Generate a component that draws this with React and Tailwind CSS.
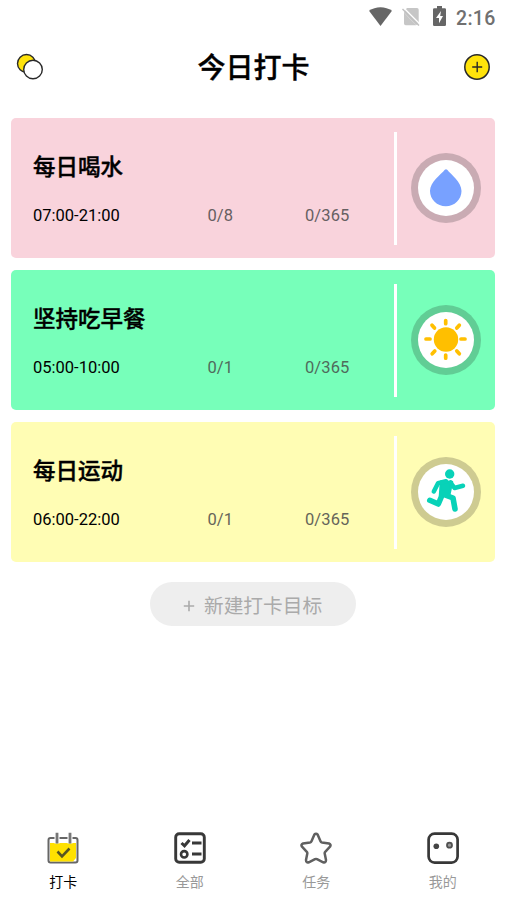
const cjk = "font-['Roboto','Noto_Sans_CJK_SC',sans-serif]";

function StatusBar() {
  return (
    <div className="flex h-[34px] items-start justify-end pr-[11px] text-[#707070]">
      <svg className="mt-[7px] mr-[10px]" width="23" height="19" viewBox="0 0 23 19">
        <path d="M0 3.800C6.500-1 16.500-1 23 3.800L11.500 19z" fill="#666" />
      </svg>
      <svg className="mt-[7px] mr-[13px]" width="18" height="19" viewBox="0 0 18 19">
        <path d="M5 1h10q1.700 0 1.700 1.700V16L3.800 2.200zM2 5.500L14 18.200H3.700Q2 18.200 2 16.500z" fill="#c6c6c6" />
        <path d="M2 5.500L14 18.200L16.700 16L3.800 2.200z" fill="#c6c6c6" />
        <path d="M1.800 1L18 17.200" stroke="#fff" strokeWidth="1.300" />
        <path d="M.5 2L17 18.500" stroke="#c0c0c0" strokeWidth="1.500" />
      </svg>
      <svg className="mt-[6px] mr-[10px]" width="13" height="20" viewBox="0 0 13 20">
        <path d="M4 0h5v2.200h2.800Q13 2.200 13 3.500v15.200Q13 20 11.700 20H1.300Q0 20 0 18.700V3.500Q0 2.200 1.300 2.200H4z" fill="#666" />
        <path d="M8 5L3 12h3v5.200L10 10H7.200z" fill="#fff" />
      </svg>
      <span className="mt-[8px] w-[39px] whitespace-nowrap text-[19.500px] leading-[22px] font-medium tracking-[0.300px]">2:16</span>
    </div>
  );
}

function Header() {
  return (
    <header className="flex h-[66px] items-center justify-between pr-[15px] pl-[16px]">
      <svg width="28" height="28" viewBox="0 0 28 28">
        <circle cx="10.500" cy="10.500" r="9" fill="#ffe30b" stroke="#292929" strokeWidth="1.400" />
        <circle cx="17" cy="16.500" r="9.300" fill="#fff" stroke="#292929" strokeWidth="1.400" />
      </svg>
      <h1 className="pt-[4px] text-[28px] leading-[40px] font-medium text-black [-webkit-text-stroke:0.4px_black]">今日打卡</h1>
      <svg width="28" height="28" viewBox="0 0 28 28">
        <circle cx="14" cy="14" r="12.200" fill="#ffe30b" stroke="#292929" strokeWidth="1.500" />
        <path d="M9.200 14h10M14.200 8.800v10.400" stroke="#292929" strokeWidth="1.400" />
      </svg>
    </header>
  );
}

function Drop() {
  return (
    <svg width="56" height="56" viewBox="0 0 56 56">
      <path d="M26.800 9.800Q28 8.800 29.200 9.800C33 14.500 43.500 22 43.500 31C43.500 39.500 36.500 46.200 27.800 46.200S12 39.500 12 31C12 22 23 14.500 26.800 9.800Z" fill="#78a1ff" />
    </svg>
  );
}

function Sun() {
  return (
    <svg width="56" height="56" viewBox="0 0 56 56">
      <circle cx="28" cy="27.500" r="12.200" fill="#ffbf00" />
      <path d="M27.700 8.500v3.200M27.700 43v3.200M8 27h4M43 27h4M14 13.200l2.500 2.800M38.800 39l2.500 2.800M41.300 13.200l-2.500 2.800M16.800 39l-2.600 2.800" stroke="#ffbf00" strokeWidth="3.700" strokeLinecap="round" />
    </svg>
  );
}

function Runner() {
  return (
    <svg width="56" height="56" viewBox="0 0 56 56">
      <circle cx="31.700" cy="10" r="4.700" fill="#08d2b8" />
      <path d="M23 17.500L34 18L31 32L22 31.500z" fill="#08d2b8" stroke="#08d2b8" strokeWidth="2.500" strokeLinejoin="round" />
      <g fill="none" stroke="#08d2b8" strokeLinejoin="round" strokeLinecap="round">
        <path d="M15.800 27.500L20 19.300L28 17.300" strokeWidth="4.500" />
        <path d="M32.500 18.500L36.500 24L45 21.800" strokeWidth="4.500" />
        <path d="M25 29L20.300 40L11.800 36.300" strokeWidth="5.600" />
        <path d="M27 31L35 34L37 45" strokeWidth="5.600" />
      </g>
    </svg>
  );
}

const habits = [
  { title: "每日喝水", time: "07:00-21:00", today: "0/8", total: "0/365", bg: "bg-[#f9d3dc]", ring: "bg-[#c9abb3]", muted: "text-[#665f62]", Icon: Drop },
  { title: "坚持吃早餐", time: "05:00-10:00", today: "0/1", total: "0/365", bg: "bg-[#77ffba]", ring: "bg-[#61cd95]", muted: "text-[#4f6b5c]", Icon: Sun },
  { title: "每日运动", time: "06:00-22:00", today: "0/1", total: "0/365", bg: "bg-[#fffdb4]", ring: "bg-[#cecb91]", muted: "text-[#66655a]", Icon: Runner },
];

function HabitCard({ title, time, today, total, bg, ring, muted, Icon }) {
  return (
    <article className={`flex h-[140px] items-center rounded-[5px] ${bg}`}>
      <div className="flex h-full w-[383px] flex-col pt-[33px] pl-[22px]">
        <h2 className="text-[22.500px] leading-[32px] font-medium text-black [-webkit-text-stroke:0.4px_black]">{title}</h2>
        <div className="mt-[23px] flex text-[16.500px] leading-[20px] whitespace-nowrap">
          <span className="w-[174.500px] text-black">{time}</span>
          <span className={`w-[97.500px] tracking-[0.100px] ${muted}`}>{today}</span>
          <span className={`tracking-[0.100px] ${muted}`}>{total}</span>
        </div>
      </div>
      <div className="h-[113px] w-[3px] bg-white" />
      <div className={`ml-[14px] flex size-[70px] items-center justify-center rounded-full ${ring}`}>
        <div className="size-[56px] rounded-full bg-white">
          <Icon />
        </div>
      </div>
    </article>
  );
}

function CheckInIcon() {
  return (
    <svg width="32" height="32" viewBox="0 0 32 32">
      <rect x="1.500" y="6" width="29" height="24.500" rx="2" fill="#fff" stroke="#666" strokeWidth="2" />
      <path d="M3 11h26v15l-3 3.500H3z" fill="#ffe100" />
      <path d="M7.500 4.500h5v7h-5zM20.500 4.500h5v7h-5z" fill="#fff" />
      <path d="M10 .8v10.700M23 .8v10.700" stroke="#777" strokeWidth="2.800" />
      <path d="M10.500 19.500l4.500 4.800L22.500 16.500" fill="none" stroke="#565522" strokeWidth="2.600" />
    </svg>
  );
}

function ListIcon() {
  return (
    <svg width="32" height="32" viewBox="0 0 32 32" fill="none" stroke="#383838">
      <rect x="1.700" y="1.700" width="28.600" height="28.600" rx="3.500" strokeWidth="2.900" />
      <path d="M7.500 11l3 2.800L15.500 8M18 11h9.500M18 22h9.500" strokeWidth="3" />
      <circle cx="10.200" cy="22.300" r="3.200" strokeWidth="2.600" />
    </svg>
  );
}

function StarIcon() {
  return (
    <svg width="32" height="32" viewBox="0 0 32 32" fill="none">
      <path d="M14.300 2.700Q16 .8 17.700 2.700L20.500 9.200Q20.900 10.200 22 10.400L29 11.500Q31.500 12.500 30 14.700L25.200 19.800Q24.500 20.600 24.700 21.600L26 28Q26 31 23.200 30.300L17 27.200Q16 26.800 15 27.200L8.800 30.300Q6 31 6 28L7.300 21.600Q7.500 20.600 6.800 19.800L2 14.700Q.5 12.500 3 11.500L10 10.400Q11.100 10.200 11.500 9.200Z" stroke="#606060" strokeWidth="2.500" strokeLinejoin="round" />
    </svg>
  );
}

function FaceIcon() {
  return (
    <svg width="32" height="32" viewBox="0 0 32 32" fill="none">
      <rect x="1.600" y="1.600" width="29" height="29" rx="6" stroke="#383838" strokeWidth="2.700" />
      <circle cx="9.300" cy="14.300" r="2.800" fill="#444" />
      <circle cx="22.500" cy="13.200" r="2.500" fill="#999" stroke="#505050" strokeWidth="1.800" />
    </svg>
  );
}

const tabs = [
  { label: "打卡", Icon: CheckInIcon, color: "text-black" },
  { label: "全部", Icon: ListIcon, color: "text-[#999]" },
  { label: "任务", Icon: StarIcon, color: "text-[#999]" },
  { label: "我的", Icon: FaceIcon, color: "text-[#999]" },
];

export default function App() {
  return (
    <div className={`flex h-[900px] w-[506px] flex-col overflow-hidden bg-white ${cjk}`}>
      <StatusBar />
      <Header />
      <main className="flex flex-1 flex-col gap-3 px-[11px] pt-[18px]">
        {habits.map((h) => (
          <HabitCard key={h.title} {...h} />
        ))}
        <button className="mt-[8px] flex h-[44px] w-[206px] items-center self-center rounded-full bg-[#eee] pl-[33px] text-[#aaa]">
          <svg className="mt-[3px] mr-[9px]" width="12" height="12" viewBox="0 0 12 12">
            <path d="M.8 6h10.400M6 .8v10.400" stroke="#aaa" strokeWidth="1.600" />
          </svg>
          <span className="pt-[5px] text-[19.700px] leading-[28px] whitespace-nowrap">新建打卡目标</span>
        </button>
      </main>
      <nav className="grid h-[68px] grid-cols-4">
        {tabs.map(({ label, Icon, color }) => (
          <div key={label} className="flex flex-col items-center">
            <Icon />
            <span className={`mt-[8px] text-[14px] leading-[20px] ${color}`}>{label}</span>
          </div>
        ))}
      </nav>
    </div>
  );
}
